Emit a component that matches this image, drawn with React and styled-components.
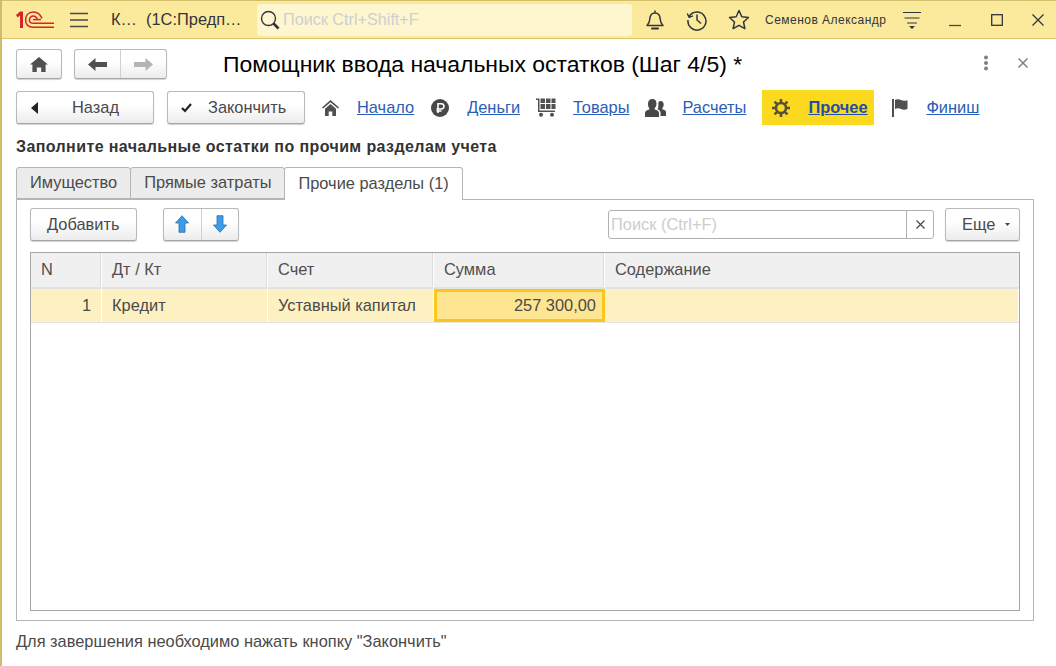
import React from "react"
import styled, { createGlobalStyle } from "styled-components"

const Global = createGlobalStyle`
  html, body { margin:0; padding:0; height:100%; background:#fff; overflow:hidden; }
  body { font-family:"Liberation Sans", Arial, sans-serif; }
  #root { height:100%; }
`
const Page = styled.div`
  width:1056px;
  height:666px;
  box-sizing:border-box;
  border-left:2px solid #cfbd6e;
  display:flex;
  flex-direction:column;
  overflow:hidden;
  background:#fff;
`
const TopBar = styled.div`
  height:39px;
  flex:none;
  box-sizing:border-box;
  margin-left:-2px;
  background:#fbea9b;
  border-top:1px solid #d2c06c;
  border-bottom:1px solid #d9c772;
  display:flex;
  align-items:center;
  color:#33343f;
`
const Logo = styled.svg`
  width:38px;
  height:18px;
  margin-left:16px;
  flex:none;
`
const IconSlot = styled.div`
  flex:none;
  display:flex;
  align-items:center;
  justify-content:center;
  margin-left:${p => p.$ml || 0}px;
  width:${p => p.$w || 24}px;
`
const AppTitle = styled.div`
  margin-left:23px;
  width:146px;
  font-size:16.400px;
  white-space:pre;
  color:#33343f;
  flex:none;
`
const GlobalSearch = styled.div`
  width:375px;
  height:32px;
  flex:none;
  background:#fdf6cf;
  border-radius:3px;
  display:flex;
  align-items:center;
  padding-left:2px;
  box-sizing:border-box;
  font-size:16.200px;
  color:#cfcfcf;
  gap:2px;
`
const UserName = styled.div`
  margin-left:15px;
  width:138px;
  flex:none;
  font-size:12px;
  letter-spacing:.48px;
  color:#33343f;
`
const Body = styled.div`
  flex:1;
  min-height:0;
  padding:10px 22px 0 14px;
  display:flex;
  flex-direction:column;
`
const HeadRow = styled.div`
  display:flex;
  align-items:center;
  height:30px;
`
const Button = styled.button`
  box-sizing:border-box;
  height:${p => p.$h || 32}px;
  width:${p => p.$w}px;
  flex:none;
  padding:0;
  border:1px solid #b9b9b9;
  border-bottom-color:#a5a5a5;
  border-radius:3px;
  background:linear-gradient(#ffffff 40%, #ececec);
  box-shadow:0 1px 1px rgba(0,0,0,.18);
  font-family:inherit;
  font-size:16.400px;
  color:#4a4a4a;
  display:flex;
  align-items:center;
  position:relative;
  margin-left:${p => p.$ml || 0}px;
`
const ButtonLabel = styled.span`
  margin-left:${p => p.$ml || 0}px;
`
const SplitPart = styled.span`
  flex:1;
  height:100%;
  display:flex;
  align-items:center;
  justify-content:center;
  & + & { border-left:1px solid #d0d0d0; }
`
const Title = styled.h1`
  margin:0 0 0 56px;
  font-weight:400;
  font-size:22.950px;
  color:#000;
  white-space:nowrap;
  flex:1;
`
const WinTools = styled.div`
  display:flex;
  align-items:center;
  gap:29px;
  padding-bottom:2px;
  margin-right:6px;
`
const NavRow = styled.div`
  display:flex;
  align-items:center;
  margin-top:10px;
  height:37px;
`
const NavIcon = styled.span`
  flex:none;
  display:flex;
  align-items:center;
  justify-content:center;
  width:22px;
  margin-left:${p => p.$ml || 15}px;
`
const NavLink = styled.a`
  flex:none;
  font-size:16.400px;
  color:${p => p.$active ? "#1f4fa8" : "#2a5db8"};
  font-weight:${p => p.$active ? 700 : 400};
  text-decoration:underline;
  margin-left:${p => p.$ml || 16}px;
`
const ActiveStep = styled.div`
  flex:none;
  height:35px;
  width:112px;
  margin-left:16px;
  padding-left:9px;
  box-sizing:border-box;
  background:#fbd91f;
  display:flex;
  align-items:center;
`
const Heading = styled.div`
  font-size:16px;
  font-weight:700;
  letter-spacing:.4px;
  color:#333;
  margin-top:12px;
  line-height:18px;
  white-space:nowrap;
`
const Tabs = styled.div`
  display:flex;
  margin-top:11px;
  height:33px;
  position:relative;
  z-index:1;
`
const Tab = styled.div`
  box-sizing:border-box;
  height:${p => p.$active ? 33 : 32}px;
  padding:0 13px 1px;
  display:flex;
  align-items:center;
  font-size:16.400px;
  color:#4a4a4a;
  border:1px solid #b5b5b5;
  border-bottom:${p => p.$active ? "none" : "1px solid #b5b5b5"};
  margin-left:${p => p.$first ? 0 : -1}px;
  border-radius:3px 3px 0 0;
  background:${p => p.$active ? "#fff" : "#ececec"};
`
const Panel = styled.div`
  box-sizing:border-box;
  margin-top:-1px;
  width:1018px;
  height:422px;
  flex:none;
  border:1px solid #b5b5b5;
  padding:8px 13px 9px 13px;
  display:flex;
  flex-direction:column;
`
const Toolbar = styled.div`
  display:flex;
  align-items:center;
  height:32px;
`
const SearchBox = styled.div`
  margin-left:auto;
  box-sizing:border-box;
  width:326px;
  height:29px;
  border:1px solid #b0b0b0;
  border-radius:3px;
  display:flex;
  align-items:stretch;
  font-size:16.400px;
  color:#cdcdcd;
`
const SearchText = styled.div`
  flex:1;
  display:flex;
  align-items:center;
  padding-left:2px;
`
const SearchClear = styled.div`
  width:26px;
  flex:none;
  border-left:1px solid #b0b0b0;
  display:flex;
  align-items:center;
  justify-content:center;
`
const Table = styled.div`
  box-sizing:border-box;
  margin-top:12px;
  flex:1;
  border:1px solid #a6a6a6;
  display:flex;
  flex-direction:column;
`
const Row = styled.div`
  display:grid;
  grid-template-columns:71px 166px 166px 171px 1fr;
  height:${p => p.$h}px;
  flex:none;
  border-bottom:${p => p.$line ? "1px solid #e3e3e3" : "none"};
`
const HeadCell = styled.div`
  background:#f0f0f0;
  border-right:1px solid #fff;
  border-bottom:2px solid #e2e2e2;
  box-shadow:inset -1px 0 0 #dcdcdc;
  display:flex;
  align-items:center;
  padding:0 0 2px 10px;
  font-size:16.400px;
  color:#4f4f4f;
  &:last-child { box-shadow:none; border-right:none; }
`
const Cell = styled.div`
  background:${p => p.$current ? "#fee592" : "#fdf1c2"};
  border-right:${p => p.$current ? "none" : "1px solid #fff"};
  box-sizing:border-box;
  ${p => p.$current && "border:3px solid #fdc61a;"}
  display:flex;
  align-items:center;
  justify-content:${p => p.$right ? "flex-end" : "flex-start"};
  padding:0 ${p => p.$right ? (p.$current ? 6 : 10) : 0}px 0 ${p => p.$right ? 0 : 10}px;
  font-size:16.400px;
  white-space:nowrap;
  color:#4a4a4a;
`
const Footer = styled.div`
  font-size:16.400px;
  color:#4a4a4a;
  margin-top:11px;
  line-height:18px;
  white-space:nowrap;
`

function Bell() {
  return <svg width="20" height="22" viewBox="0 0 20 22" fill="none" stroke="#33343f" strokeWidth="1.5">
    <path d="M2 16.5c2-1.8 2.6-3.6 2.8-6.5.2-3.4 2-6 5.2-6s5 2.6 5.2 6c.2 2.9.8 4.7 2.8 6.5z" strokeLinejoin="round" />
    <path d="M10 1.5v2.3" />
    <path d="M7 19.5h6" strokeWidth="2" strokeLinecap="round" />
  </svg>
}

export default function App() {
  return <Page>
    <Global />
    <TopBar>
      <Logo viewBox="0 0 38 18">
        <path d="M0 4 L4 .5 H7 V17 H4 V4.600 L1.600 6.600z" fill="#d8232a" />
        <g fill="none" stroke="#d8232a" strokeWidth="1.500">
          <path d="M26 7.500 C24 2.500 20.500 1 17.500 1 C12 1 9.600 5 9.600 9 C9.600 13.500 12.500 16.200 17.500 16.200 H38" />
          <path d="M21.500 8.500 C20.500 6 19 5 17.500 5 C14.800 5 13.400 7 13.400 9 C13.400 11 15 12.300 17.500 12.300 H38" />
          <path d="M17 8.600 H25" />
        </g>
      </Logo>
      <IconSlot $ml={16} $w={18}>
        <svg width="18" height="16" viewBox="0 0 18 16" stroke="#4a4a44" strokeWidth="1.3"><path d="M0 1.5h18M0 8h18M0 14.500h18" /></svg>
      </IconSlot>
      <AppTitle>К…  (1С:Предп…</AppTitle>
      <GlobalSearch>
        <svg width="22" height="22" viewBox="0 0 22 22" fill="none" stroke="#33343f"><circle cx="9.500" cy="9.500" r="7" strokeWidth="1.4" /><path d="M14.500 14.500l5 5" strokeWidth="2.600" /></svg>
        Поиск Ctrl+Shift+F
      </GlobalSearch>
      <IconSlot $ml={13} $w={20}><Bell /></IconSlot>
      <IconSlot $ml={21} $w={22}>
        <svg width="22" height="22" viewBox="0 0 22 22" fill="none" stroke="#33343f" strokeWidth="1.5"><path d="M3.200 7.500A9 9 0 1 1 2 11" /><path d="M1.200 4.500l2 3.800 3.800-1.400" /><path d="M11 5.500V11l4 3.500" /></svg>
      </IconSlot>
      <IconSlot $ml={20} $w={22}>
        <svg width="22" height="21" viewBox="0 0 22 21" fill="none" stroke="#33343f" strokeWidth="1.5" strokeLinejoin="round"><path d="M11 1.500l2.800 6.300 6.700.7-5 4.500 1.400 6.700L11 16.300l-5.900 3.400 1.400-6.700-5-4.500 6.700-.7z" /></svg>
      </IconSlot>
      <UserName>Семенов Александр</UserName>
      <IconSlot $w={18}>
        <svg width="18" height="18" viewBox="0 0 18 18" fill="#33343f" stroke="#33343f"><path d="M0 1.500h18M1.500 7h15M4 12h10" strokeWidth="1.2" /><path d="M6 15h6l-3 3z" stroke="none" /></svg>
      </IconSlot>
      <IconSlot $ml={28} $w={12}>
        <svg width="12" height="14" viewBox="0 0 12 14" stroke="#4a4a44" strokeWidth="1.3"><path d="M0 12.500h12" /></svg>
      </IconSlot>
      <IconSlot $ml={30} $w={12}>
        <svg width="12" height="12" viewBox="0 0 12 12" fill="none" stroke="#33343f" strokeWidth="1.3"><rect x=".7" y=".7" width="10.600" height="10.600" /></svg>
      </IconSlot>
      <IconSlot $ml={29} $w={12}>
        <svg width="12" height="12" viewBox="0 0 12 12" stroke="#33343f" strokeWidth="1.3"><path d="M.5.5l11 11M11.500.5l-11 11" /></svg>
      </IconSlot>
    </TopBar>
    <Body>
      <HeadRow>
        <Button $w={46} $h={30} aria-label="home">
          <SplitPart>
            <svg width="18" height="15" viewBox="0 0 18 15" fill="#505050"><path d="M9 0l9 7.600h-2.400V15h-4.400v-4.600H6.800V15H2.400V7.600H0z" /></svg>
          </SplitPart>
        </Button>
        <Button $w={93} $h={30} $ml={12}>
          <SplitPart>
            <svg width="19" height="13" viewBox="0 0 19 13" fill="#505050"><path d="M0 6.500L7.500 0v4H19v5H7.500v4z" /></svg>
          </SplitPart>
          <SplitPart>
            <svg width="19" height="13" viewBox="0 0 19 13" fill="#b4b4b4"><path d="M19 6.500L11.500 0v4H0v5h11.500v4z" /></svg>
          </SplitPart>
        </Button>
        <Title>Помощник ввода начальных остатков (Шаг 4/5) *</Title>
        <WinTools>
          <svg width="6" height="16" viewBox="0 0 6 16" fill="#808080"><circle cx="3" cy="2.500" r="2" /><circle cx="3" cy="8" r="2" /><circle cx="3" cy="13.500" r="2" /></svg>
          <svg width="10" height="10" viewBox="0 0 10 10" stroke="#808080" strokeWidth="1.5"><path d="M.5.5l9 9M9.500.5l-9 9" /></svg>
        </WinTools>
      </HeadRow>
      <NavRow>
        <Button $w={138} $h={33}>
          <svg style={{ marginLeft: 14 }} width="7" height="12" viewBox="0 0 7 12" fill="#222"><path d="M7 0v12L0 6z" /></svg>
          <ButtonLabel $ml={34}>Назад</ButtonLabel>
        </Button>
        <Button $w={138} $h={33} $ml={13}>
          <svg style={{ marginLeft: 13 }} width="11" height="10" viewBox="0 0 11 10" fill="none" stroke="#222" strokeWidth="2.2"><path d="M1 5l3 3 6-7" /></svg>
          <ButtonLabel $ml={16}>Закончить</ButtonLabel>
        </Button>
        <NavIcon $ml={14}>
          <svg width="17" height="16" viewBox="0 0 17 16" fill="#505050"><path d="M8.500 0l8.500 7.500-1.100 1L8.500 2.300 1.100 8.500 0 7.500z" /><path d="M3 8.800l5.500-4.700L14 8.800V16h-3.700v-4.500H6.700V16H3z" /></svg>
        </NavIcon>
        <NavLink href="#">Начало</NavLink>
        <NavIcon>
          <svg width="18" height="18" viewBox="0 0 18 18"><circle cx="9" cy="9" r="9" fill="#484848" /><path d="M7 14V4.700h3.300a2.500 2.500 0 0 1 0 5.300H5.500M5.500 12h5" fill="none" stroke="#fff" strokeWidth="1.600" /></svg>
        </NavIcon>
        <NavLink href="#">Деньги</NavLink>
        <NavIcon>
          <svg width="20" height="19" viewBox="0 0 20 19" fill="#505050"><path d="M0 .5h3.500v12H19V14H2V2H0z" /><rect x="4.500" y=".5" width="4.500" height="4.500" /><rect x="10" y=".5" width="4.500" height="4.500" /><rect x="15.500" y=".5" width="4" height="4.500" /><rect x="4.500" y="6" width="4.500" height="5" /><rect x="10" y="6" width="4.500" height="5" /><rect x="15.500" y="6" width="4" height="5" /><circle cx="5" cy="16.800" r="2" /><circle cx="16" cy="16.800" r="2" /></svg>
        </NavIcon>
        <NavLink href="#">Товары</NavLink>
        <NavIcon>
          <svg width="21" height="18" viewBox="0 0 21 18" fill="#484848"><path d="M7.500 0c2.800 0 4 2 4 4.500 0 2-.7 3.500-1.800 4.500v1.500c2.300.7 4.300 1.800 4.300 3.500V18H0v-4c0-1.700 2-2.800 4.300-3.500V9C3.200 8 3 6.500 3 4.500 3 2 4.700 0 7.500 0z" /><path d="M15.500 2c2.200 0 3.200 1.600 3.200 3.600 0 1.500-.5 2.700-1.300 3.500v1.200c1.800.5 3.600 1.400 3.600 2.700V17h-5.500v-3.500c0-1.300-1.500-2.700-3-3.200.8-1.300 1-3 .9-4.700C13 3.500 13.800 2 15.500 2z" /></svg>
        </NavIcon>
        <NavLink href="#">Расчеты</NavLink>
        <ActiveStep>
          <svg width="20" height="20" viewBox="0 0 20 20" fill="none" stroke="#575136"><circle cx="10" cy="10" r="5" strokeWidth="2.600" /><path d="M10 1v3.500M10 15.500V19M1 10h3.500M15.500 10H19M3.600 3.600l2.500 2.500M13.900 13.900l2.500 2.500M16.400 3.600l-2.500 2.500M6.100 13.900l-2.500 2.500" strokeWidth="2.600" /></svg>
          <NavLink href="#" $active $ml={17}>Прочее</NavLink>
        </ActiveStep>
        <NavIcon>
          <svg width="17" height="18" viewBox="0 0 17 18" fill="#505050"><rect x="0" y="0" width="2" height="18" /><path d="M3 .8c2-.8 4-.8 6 .2s4 1 6.500.2V10c-2.500 1-4.500 1-6.500 0S5 9 3 10z" /></svg>
        </NavIcon>
        <NavLink href="#" $ml={15}>Финиш</NavLink>
      </NavRow>
      <Heading>Заполните начальные остатки по прочим разделам учета</Heading>
      <Tabs>
        <Tab $first>Имущество</Tab>
        <Tab>Прямые затраты</Tab>
        <Tab $active>Прочие разделы (1)</Tab>
      </Tabs>
      <Panel>
        <Toolbar>
          <Button $w={107} $h={33}><ButtonLabel $ml={16}>Добавить</ButtonLabel></Button>
          <Button $w={76} $h={33} $ml={26}>
            <SplitPart>
              <svg width="14" height="18" viewBox="0 0 14 18" fill="#3d9be9" stroke="#2a6ea8" strokeWidth=".8"><path d="M7 .7L13.500 8H10v9.300H4V8H.5z" /></svg>
            </SplitPart>
            <SplitPart>
              <svg width="14" height="18" viewBox="0 0 14 18" fill="#3d9be9" stroke="#2a6ea8" strokeWidth=".8"><path d="M7 17.300L13.500 10H10V.7H4V10H.5z" /></svg>
            </SplitPart>
          </Button>
          <SearchBox>
            <SearchText>Поиск (Ctrl+F)</SearchText>
            <SearchClear>
              <svg width="9" height="9" viewBox="0 0 9 9" stroke="#444" strokeWidth="1.100"><path d="M.5.5l8 8M8.500.5l-8 8" /></svg>
            </SearchClear>
          </SearchBox>
          <Button $w={75} $h={33} $ml={11}>
            <ButtonLabel $ml={16}>Еще</ButtonLabel>
            <svg style={{ marginLeft: 10 }} width="5" height="3" viewBox="0 0 5 3" fill="#444"><path d="M0 0h5L2.500 3z" /></svg>
          </Button>
        </Toolbar>
        <Table>
          <Row $h={36}>
            <HeadCell>N</HeadCell>
            <HeadCell>Дт / Кт</HeadCell>
            <HeadCell>Счет</HeadCell>
            <HeadCell>Сумма</HeadCell>
            <HeadCell>Содержание</HeadCell>
          </Row>
          <Row $h={33} $line>
            <Cell $right>1</Cell>
            <Cell>Кредит</Cell>
            <Cell>Уставный капитал</Cell>
            <Cell $right $current>257 300,00</Cell>
            <Cell />
          </Row>
        </Table>
      </Panel>
      <Footer>Для завершения необходимо нажать кнопку "Закончить"</Footer>
    </Body>
  </Page>
}
